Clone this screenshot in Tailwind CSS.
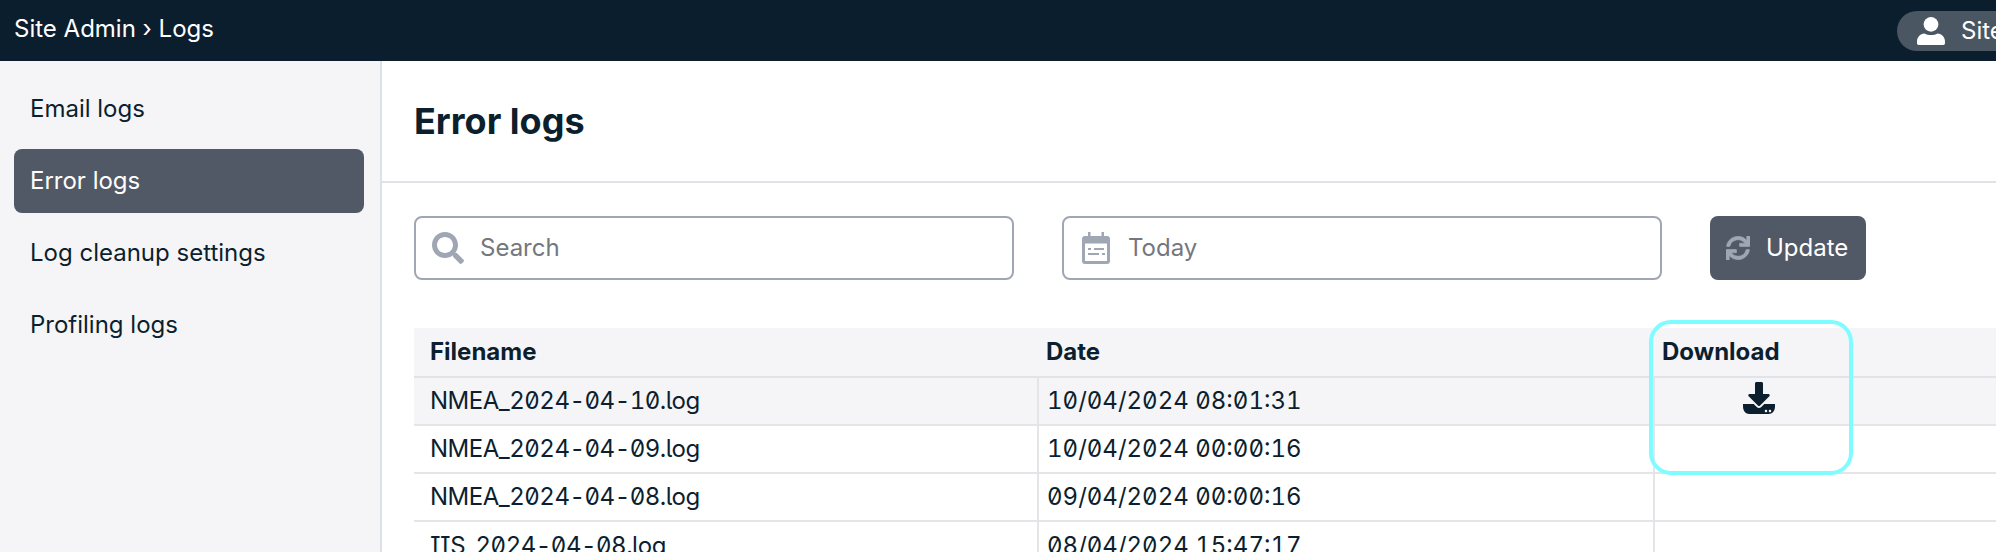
<!DOCTYPE html>
<html lang="en">
<head>
  <meta charset="UTF-8" />
  <title>Logs</title>
  <script src="https://cdn.jsdelivr.net/npm/@tailwindcss/browser@4"></script>
</head>
<body class="h-[552px] overflow-hidden bg-white text-[#0c1f2e] font-['Inter',sans-serif] text-[24px]">
  <!-- top bar -->
  <header class="h-[61px] bg-[#0b1e2d] flex items-center text-white pl-[14px] overflow-hidden">
    <div class="w-[1883px] shrink-0 pb-[4px]">Site Admin › Logs</div>
    <div class="h-10 w-[300px] shrink-0 rounded-l-full bg-[#4a5661] flex items-center pl-5 gap-4">
      <svg class="w-[28px] h-[28px]" viewBox="0 0 448 448" fill="#fff"><circle cx="224" cy="118" r="118"/><path d="M120 262c60 36 148 36 208 0 70 4 120 60 120 130v28c0 16-12 28-28 28H28c-16 0-28-12-28-28v-28c0-70 50-126 120-130z"/></svg>
      <span class="whitespace-nowrap">Site Admin</span>
    </div>
  </header>

  <div class="flex h-[491px]">
    <!-- sidebar -->
    <aside class="w-[382px] shrink-0 bg-[#f5f5f8] border-r-2 border-[#dde1e9] pl-[14px] pr-[16px] pt-[16px] flex flex-col gap-2">
      <a class="h-[64px] flex items-center px-[16px] rounded-lg">Email logs</a>
      <a class="h-[64px] flex items-center px-[16px] rounded-lg bg-[#525966] text-white">Error logs</a>
      <a class="h-[64px] flex items-center px-[16px] rounded-lg">Log cleanup settings</a>
      <a class="h-[64px] flex items-center px-[16px] rounded-lg">Profiling logs</a>
    </aside>

    <main class="flex-1 min-w-0">
      <div class="h-[122px] border-b-2 border-[#dfe3e8] pl-[32px] flex items-center">
        <h1 class="text-[36px] font-bold">Error logs</h1>
      </div>

      <div class="pl-[32px]">
        <!-- filters -->
        <div class="flex mt-[33px] h-[64px]">
          <div class="w-[600px] h-[64px] rounded-lg border-2 border-[#a0a7b4] flex items-center pl-4 gap-4 text-[#74777e]">
            <svg class="w-[32px] h-[32px]" viewBox="0 0 512 512" fill="#a0a7b4"><path d="M505 442.7L405.3 343c-4.5-4.5-10.6-7-17-7H372c27.6-35.3 44-79.7 44-128C416 93.1 322.9 0 208 0S0 93.1 0 208s93.1 208 208 208c48.3 0 92.7-16.4 128-44v16.3c0 6.4 2.5 12.5 7 17l99.7 99.7c9.4 9.4 24.6 9.4 33.9 0l28.3-28.3c9.4-9.4 9.4-24.6.1-34zM208 336c-70.7 0-128-57.2-128-128 0-70.7 57.2-128 128-128 70.7 0 128 57.2 128 128 0 70.7-57.2 128-128 128z"/></svg>
            <span>Search</span>
          </div>
          <div class="w-[600px] h-[64px] ml-[48px] rounded-lg border-2 border-[#a0a7b4] flex items-center pl-[18px] gap-[18px] text-[#74777e]">
            <svg class="w-[28px] h-[32px]" viewBox="0 0 28 32" fill="#a0a7b4"><path fill-rule="evenodd" d="M6 0h2.500v4h11V0H22v4h3a3 3 0 0 1 3 3v22a3 3 0 0 1-3 3H3a3 3 0 0 1-3-3V7a3 3 0 0 1 3-3h3V0zM3 11.500v17a.5.5 0 0 0 .5.5h21a.5.5 0 0 0 .5-.5v-17H3zm3 4.500h3v2H6v-2zm6 0h10v2H12v-2zm-6 5h11v2H6v-2zm14 0h3v2h-3v-2z"/></svg>
            <span>Today</span>
          </div>
          <button class="w-[156px] h-[64px] ml-[48px] rounded-lg bg-[#525966] text-white flex items-center pl-[16px] gap-[16px]">
            <svg class="w-[24px] h-[24px]" viewBox="0 0 512 512" fill="#a0a7b4" stroke="#a0a7b4" stroke-width="14"><path d="M440.65 12.57l4 82.77A247.16 247.16 0 0 0 255.83 8C134.73 8 33.91 94.92 12.29 209.82A12 12 0 0 0 24.09 224h49.05a12 12 0 0 0 11.67-9.26 175.91 175.91 0 0 1 317-56.94l-101.46-4.86a12 12 0 0 0-12.57 12v47.41a12 12 0 0 0 12 12H500a12 12 0 0 0 12-12V12a12 12 0 0 0-12-12h-47.37a12 12 0 0 0-11.98 12.57zM255.83 432a175.61 175.61 0 0 1-146-77.8l101.8 4.87a12 12 0 0 0 12.57-12v-47.4a12 12 0 0 0-12-12H12a12 12 0 0 0-12 12V500a12 12 0 0 0 12 12h47.35a12 12 0 0 0 12-12.6l-4.15-82.57A247.17 247.17 0 0 0 255.83 504c121.11 0 221.93-86.92 243.55-201.82a12 12 0 0 0-11.8-14.18h-49.05a12 12 0 0 0-11.67 9.26A175.86 175.86 0 0 1 255.83 432z"/></svg>
            Update
          </button>
        </div>

        <!-- table -->
        <div class="relative mt-[48px] w-[1582px]">
          <table class="w-full table-fixed border-collapse [font-feature-settings:'tnum','ss02','zero']">
            <colgroup><col class="w-[624px]"><col class="w-[616px]"><col></colgroup>
            <thead>
              <tr class="bg-[#f5f5f8] h-[49px] border-b-2 border-[#e0e3ea] text-left [font-feature-settings:normal]">
                <th class="pl-[16px] font-bold">Filename</th>
                <th class="pl-[8px] font-bold">Date</th>
                <th class="pl-[8px] font-bold">Download</th>
              </tr>
            </thead>
            <tbody>
              <tr class="bg-[#f5f5f8] h-[48px] border-b-2 border-[#e4e4e9]">
                <td class="pl-[16px] tracking-[-0.5px]">NMEA_2024-04-10.log</td>
                <td class="pl-[8px] border-l-2 border-[#e4e4e9]">10/04/2024 08:01:31</td>
                <td class="border-l-2 border-[#e4e4e9] pl-[88px]">
                  <svg class="w-[32px] h-[32px] -mt-[6px]" viewBox="0 0 512 512" fill="#0c1f2e"><path d="M216 0h80c13.3 0 24 10.7 24 24v168h87.7c17.8 0 26.7 21.500 14.100 34.100L269.700 378.300c-7.500 7.500-19.800 7.500-27.300 0L90.100 226.100c-12.600-12.600-3.700-34.100 14.100-34.100H192V24c0-13.300 10.700-24 24-24zM0 352h170.700l49 49c20.100 20.100 52.500 20.100 72.600 0l49-49H512v40c0 70-43 120-100 120H100C43 512 0 462 0 392v-40zm388 112c0-11-9-20-20-20s-20 9-20 20 9 20 20 20 20-9 20-20zm64 0c0-11-9-20-20-20s-20 9-20 20 9 20 20 20 20-9 20-20z" fill-rule="evenodd"/></svg>
                </td>
              </tr>
              <tr class="h-[48px] border-b-2 border-[#e4e4e9]">
                <td class="pl-[16px] tracking-[-0.5px]">NMEA_2024-04-09.log</td>
                <td class="pl-[8px] border-l-2 border-[#e4e4e9]">10/04/2024 00:00:16</td>
                <td class="border-l-2 border-[#e4e4e9]"></td>
              </tr>
              <tr class="h-[48px] border-b-2 border-[#e4e4e9]">
                <td class="pl-[16px] tracking-[-0.5px]">NMEA_2024-04-08.log</td>
                <td class="pl-[8px] border-l-2 border-[#e4e4e9]">09/04/2024 00:00:16</td>
                <td class="border-l-2 border-[#e4e4e9]"></td>
              </tr>
              <tr class="h-[48px]">
                <td class="pl-[16px] tracking-[-0.5px]">IIS_2024-04-08.log</td>
                <td class="pl-[8px] border-l-2 border-[#e4e4e9]">08/04/2024 15:47:17</td>
                <td class="border-l-2 border-[#e4e4e9]"></td>
              </tr>
            </tbody>
          </table>
          <!-- annotation drawn over the column -->
          <div class="absolute left-[1235px] -top-[8px] w-[204px] h-[155px] border-[4px] border-[#7ffcff] rounded-[22px]"></div>
        </div>
      </div>
    </main>
  </div>
</body>
</html>
